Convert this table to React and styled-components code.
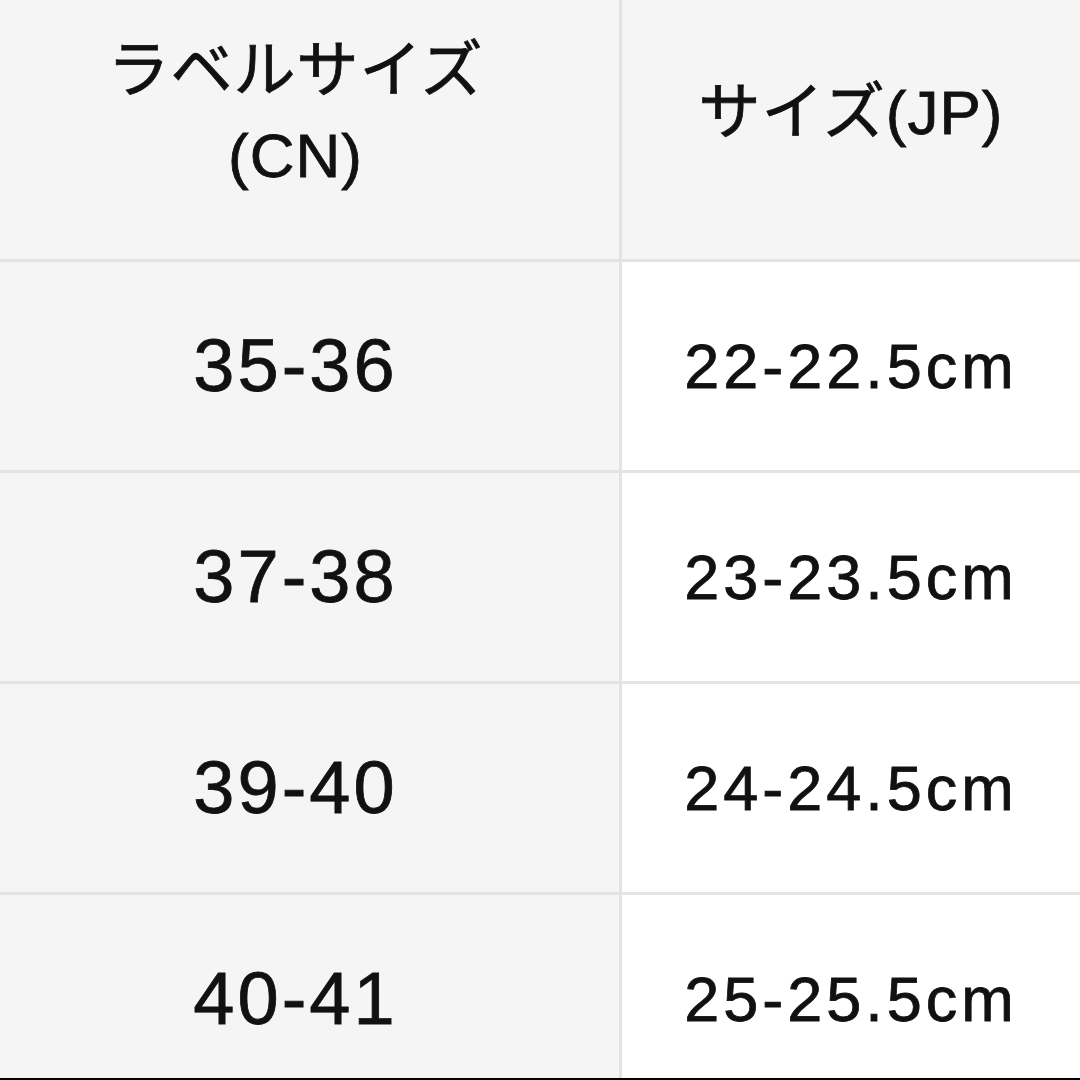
import React from 'react'
import styled, { createGlobalStyle } from 'styled-components'

const GlobalStyle = createGlobalStyle`
  html, body {
    margin: 0;
    padding: 0;
    background: #ffffff;
  }
  body {
    font-family: "Liberation Sans", "Noto Sans CJK JP", sans-serif;
    color: #111111;
  }
`

const rows = [
  { cn: '35-36', jp: '22-22.5cm' },
  { cn: '37-38', jp: '23-23.5cm' },
  { cn: '39-40', jp: '24-24.5cm' },
  { cn: '40-41', jp: '25-25.5cm' },
]

const Frame = styled.div`
  width: 1080px;
  height: 1080px;
  box-sizing: border-box;
  border-bottom: 2px solid #000;
  overflow: hidden;
`

const Table = styled.div`
  display: grid;
  grid-template-columns: 619px 1fr;
  grid-template-rows: 259px;
  grid-auto-rows: 208px;
  gap: 3px;
  background: #e3e3e3;
`

const Cell = styled.div`
  display: flex;
  align-items: center;
  justify-content: center;
  text-align: center;
  background: ${p => (p.$white ? '#ffffff' : '#f5f5f5')};
  padding-right: ${p => (p.$left ? '28px' : '0')};
  padding-bottom: ${p => (p.$head ? '34px' : '0')};
  box-sizing: border-box;
  -webkit-text-stroke: 0.8px #111;
`

const HeadText = styled.div`
  font-size: 62px;
  line-height: 85px;
  letter-spacing: 1px;
`

const LabelText = styled.div`
  font-size: 74px;
  letter-spacing: 3px;
  line-height: 1;
`

const SizeText = styled.div`
  font-size: 63px;
  letter-spacing: 4px;
  line-height: 1;
`

export default function App() {
  return (
    <>
      <GlobalStyle />
      <Frame>
        <Table>
          <Cell $head $left>
            <HeadText>
              ラベルサイズ
              <br />
              (CN)
            </HeadText>
          </Cell>
          <Cell $head>
            <HeadText>サイズ(JP)</HeadText>
          </Cell>
          {rows.map(row => (
            <React.Fragment key={row.cn}>
              <Cell $left>
                <LabelText>{row.cn}</LabelText>
              </Cell>
              <Cell $white>
                <SizeText>{row.jp}</SizeText>
              </Cell>
            </React.Fragment>
          ))}
        </Table>
      </Frame>
    </>
  )
}
